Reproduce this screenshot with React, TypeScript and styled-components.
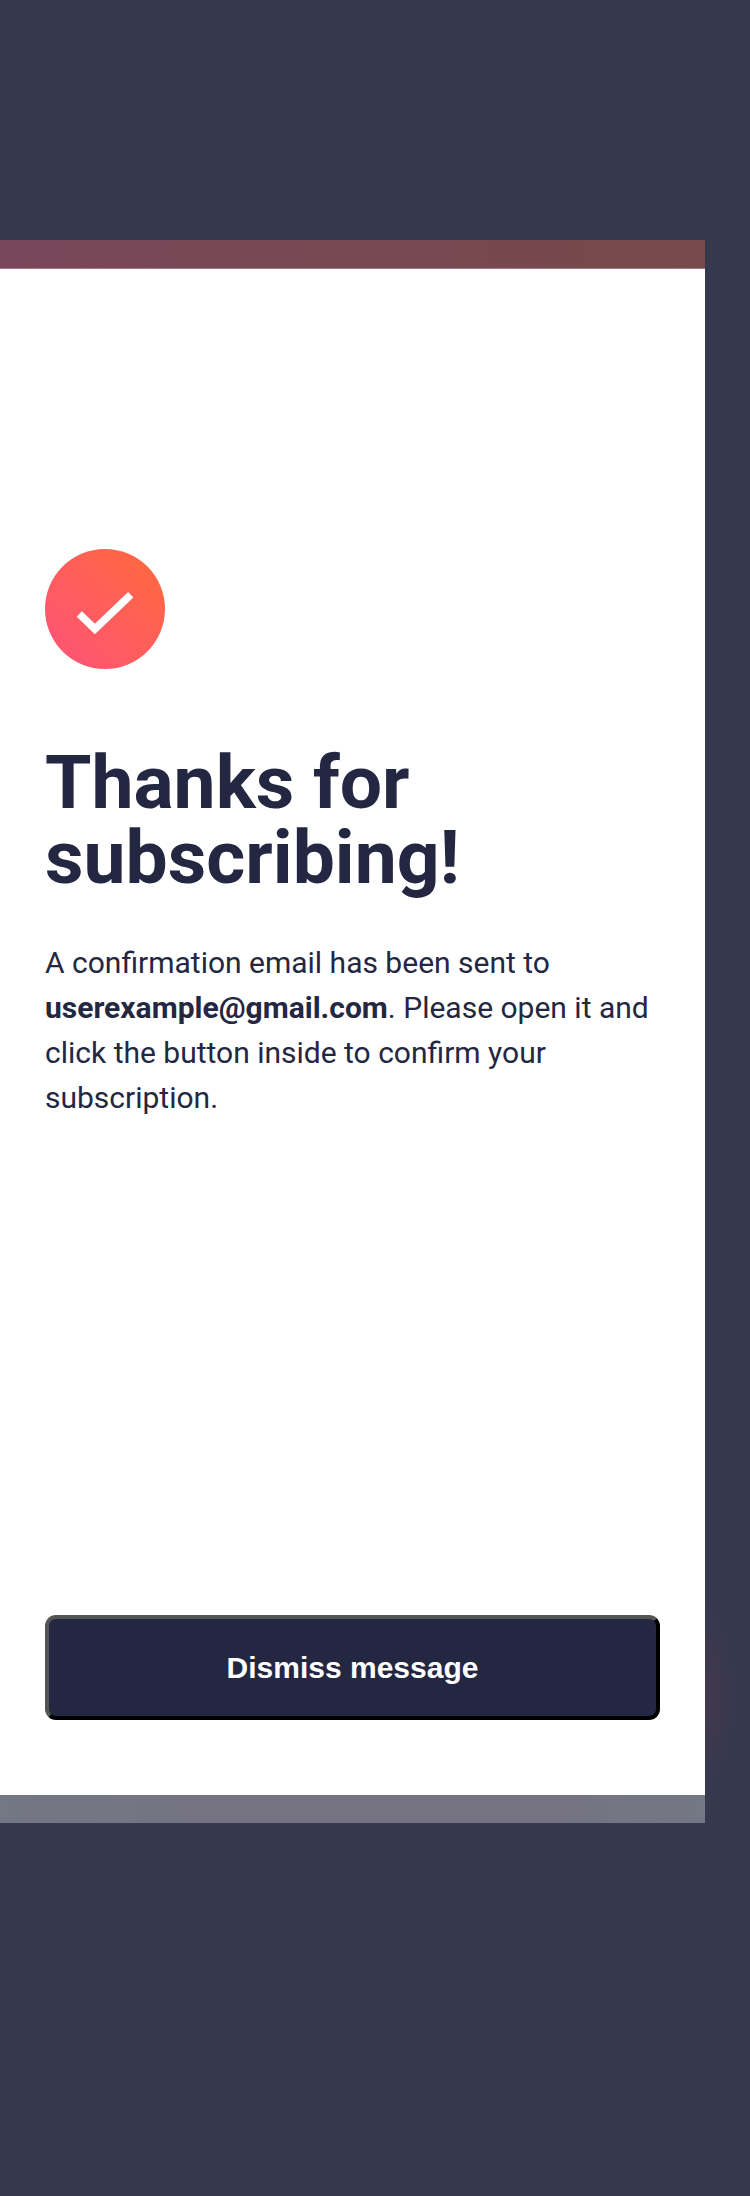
import React from "react";
import styled, { createGlobalStyle } from "styled-components";

const GlobalStyle = createGlobalStyle`
  *, *::before, *::after { box-sizing: border-box; }
  body { margin: 0; background: #36384d; }
`;

const Page = styled.main`
  min-height: 2196px;
  padding: 240px 45px 373px 0;
  background:
    radial-gradient(ellipse 32px 95px at 703px 1698px, rgba(82, 57, 78, 0.5), transparent),
    #36384e;
  color: #242742;
  font-family: Roboto, sans-serif;
`;

const Strip = styled.div<{ $tone: "warm" | "muted" }>`
  height: 28px;
  background: ${({ $tone }) =>
    $tone === "warm"
      ? "linear-gradient(90deg, #78465a 0%, #764854 35%, #76494a 100%)"
      : "linear-gradient(90deg, #747784 0%, #757281 35%, #757281 75%, #747784 100%)"};
`;

const Card = styled.section`
  display: flex;
  flex-direction: column;
  height: 1527px;
  padding: 280px 45px 75px;
  border-top: 1px solid #a5788a;
  background: #fff;
`;

const SuccessIcon = styled.svg`
  display: block;
  flex: none;
  width: 120px;
  height: 120px;
`;

const Title = styled.h1`
  margin: 76px 0 0;
  font-size: 75px;
  font-weight: 700;
  line-height: 75px;
`;

const Message = styled.p`
  margin: 45px 0 0;
  font-size: 30px;
  line-height: 45px;
`;

const DismissButton = styled.button`
  height: 105px;
  margin-top: auto;
  padding: 0;
  border: 4px solid;
  border-color: #525553 #000 #000 #525553;
  border-radius: 11px;
  background: #242742;
  color: #fff;
  font: 700 30px "Liberation Sans", sans-serif;
`;

export default function App() {
  return (
    <>
      <GlobalStyle />
      <Page>
        <Strip $tone="warm" />
        <Card>
          <SuccessIcon viewBox="0 0 64 64" aria-hidden="true">
            <defs>
              <linearGradient id="success" x1="100%" y1="0%" x2="0%" y2="100%">
                <stop offset="0%" stopColor="#FF6A3A" />
                <stop offset="100%" stopColor="#FF527B" />
              </linearGradient>
            </defs>
            <circle cx="32" cy="32" r="32" fill="url(#success)" />
            <path d="m18.286 34.686 8.334 7.98 19.094-18.285" fill="none" stroke="#fff" strokeWidth="4" />
          </SuccessIcon>
          <Title>
            Thanks for
            <br />
            subscribing!
          </Title>
          <Message>
            A confirmation email has been sent to <strong>userexample@gmail.com</strong>. Please open it and
            click the button inside to confirm your subscription.
          </Message>
          <DismissButton type="button">Dismiss message</DismissButton>
        </Card>
        <Strip $tone="muted" />
      </Page>
    </>
  );
}
